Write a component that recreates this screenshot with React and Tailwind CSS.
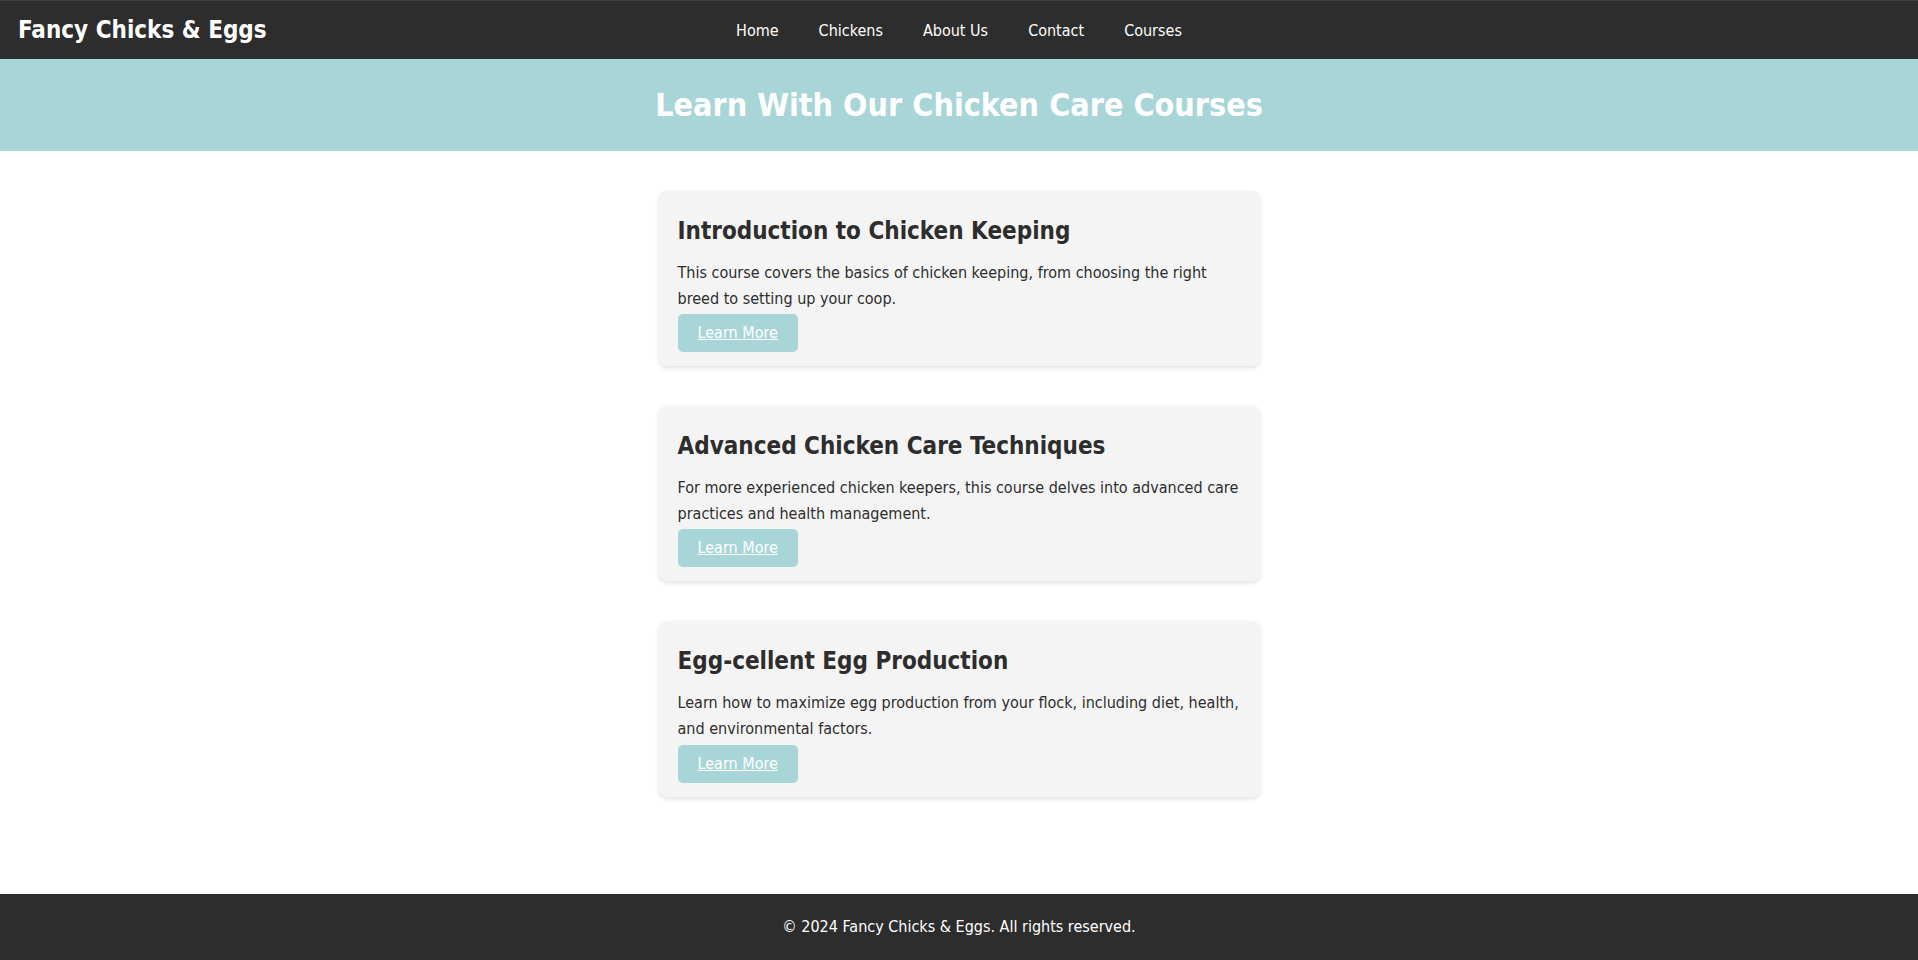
import React from "react";

const courses = [
  {
    title: "Introduction to Chicken Keeping",
    text: "This course covers the basics of chicken keeping, from choosing the right breed to setting up your coop.",
  },
  {
    title: "Advanced Chicken Care Techniques",
    text: "For more experienced chicken keepers, this course delves into advanced care practices and health management.",
  },
  {
    title: "Egg-cellent Egg Production",
    text: "Learn how to maximize egg production from your flock, including diet, health, and environmental factors.",
  },
];

const navLinks = ["Home", "Chickens", "About Us", "Contact", "Courses"];

export default function App() {
  return (
    <div className="min-h-screen flex flex-col bg-white font-['DejaVu_Sans_Condensed','DejaVu_Sans',sans-serif] font-stretch-condensed text-[#333]">
      <header className="h-[59px] grid grid-cols-[1fr_auto_1fr] items-center bg-[#2d2d2d] border-t border-[#3c3c3c] px-[18px] text-white">
        <h1 className="text-[24px] font-bold leading-none">Fancy Chicks &amp; Eggs</h1>
        <nav className="flex gap-[40px] text-[16px] pt-[2px]">
          {navLinks.map((link) => (
            <a key={link} href="#" className="text-white">
              {link}
            </a>
          ))}
        </nav>
        <div />
      </header>

      <section className="h-[92px] flex items-center justify-center bg-[#a8d5d7]">
        <h2 className="text-[32px] font-bold text-white">Learn With Our Chicken Care Courses</h2>
      </section>

      <main className="flex-1 flex flex-col items-center gap-[40px] pt-[40px] pb-[40px]">
        {courses.map((course) => (
          <div
            key={course.title}
            className="w-[601px] bg-[#f4f4f4] rounded-[8px] shadow-[0_2px_5px_rgba(0,0,0,0.12)] pt-[26px] pb-[14px] pl-[19px] pr-[15px]"
          >
            <h3 className="text-[24px] leading-[29px] font-bold text-[#2d2d2d]">{course.title}</h3>
            <p className="mt-[14px] text-[16px] leading-[25.6px] text-[#2d2d2d]">{course.text}</p>
            <a
              href="#"
              className="mt-[3px] block w-fit h-[38px] leading-[38px] px-[20px] rounded-[5px] bg-[#a8d5d7] text-white underline text-[16px]"
            >
              Learn More
            </a>
          </div>
        ))}
      </main>

      <footer className="h-[66px] flex items-center justify-center bg-[#2d2d2d] text-white text-[16px]">
        © 2024 Fancy Chicks &amp; Eggs. All rights reserved.
      </footer>
    </div>
  );
}
